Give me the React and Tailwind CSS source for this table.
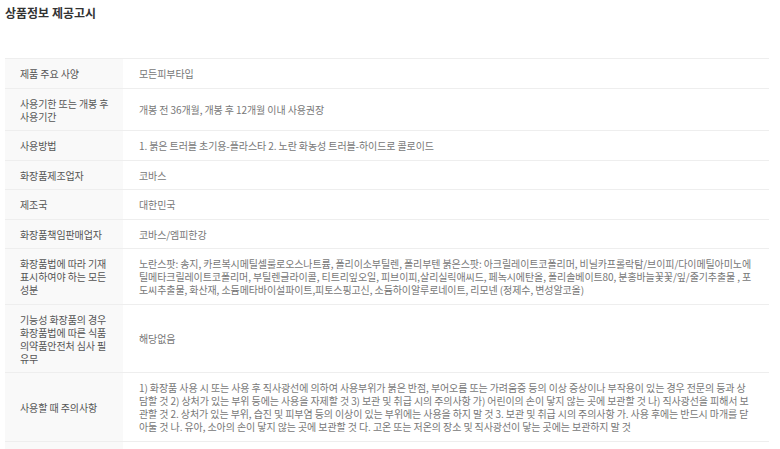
import React from 'react'

const rows = [
    { label: '제품 주요 사양', value: '모든피부타입' },
    { label: '사용기한 또는 개봉 후 사용기간', value: '개봉 전 36개월, 개봉 후 12개월 이내 사용권장' },
    { label: '사용방법', value: '1. 붉은 트러블 초기용-플라스타 2. 노란 화농성 트러블-하이드로 콜로이드' },
    { label: '화장품제조업자', value: '코바스' },
    { label: '제조국', value: '대한민국' },
    { label: '화장품책임판매업자', value: '코바스/엠피한강' },
    {
        label: '화장품법에 따라 기재 표시하여야 하는 모든 성분',
        value: '노란스팟: 송지, 카르복시메틸셀룰로오스나트륨, 폴리이소부틸렌, 폴리부텐 붉은스팟: 아크릴레이트코폴리머, 비닐카프롤락탐/브이피/다이메틸아미노에틸메타크릴레이트코폴리머, 부틸렌글라이콜, 티트리잎오일, 피브이피,살리실릭애씨드, 페녹시에탄올, 폴리솔베이트80, 분홍바늘꽃꽃/잎/줄기추출물 , 포도씨추출물, 화산재, 소듐메타바이설파이트,피토스핑고신, 소듐하이알루로네이트, 리모넨 (정제수, 변성알코올)',
    },
    { label: '기능성 화장품의 경우 화장품법에 따른 식품의약품안전처 심사 필 유무', value: '해당없음' },
    {
        label: '사용할 때 주의사항',
        value: '1) 화장품 사용 시 또는 사용 후 직사광선에 의하여 사용부위가 붉은 반점, 부어오름 또는 가려움증 등의 이상 증상이나 부작용이 있는 경우 전문의 등과 상담할 것 2) 상처가 있는 부위 등에는 사용을 자제할 것 3) 보관 및 취급 시의 주의사항 가) 어린이의 손이 닿지 않는 곳에 보관할 것 나) 직사광선을 피해서 보관할 것 2. 상처가 있는 부위, 습진 및 피부염 등의 이상이 있는 부위에는 사용을 하지 말 것 3. 보관 및 취급 시의 주의사항 가. 사용 후에는 반드시 마개를 닫아둘 것 나. 유아, 소아의 손이 닿지 않는 곳에 보관할 것 다. 고온 또는 저온의 장소 및 직사광선이 닿는 곳에는 보관하지 말 것',
    },
]

const App = () => {
    return (
        <div className="w-[780px] h-[449px] overflow-hidden bg-white font-['Noto_Sans_CJK_KR',sans-serif]">
            <h2 className="pl-[5px] pt-[5px] text-[12px] leading-[16px] font-bold text-[#333]">상품정보 제공고시</h2>

            <table className="ml-[5px] mt-[37px] w-[764px] border-collapse border-t border-[#eeeeee] table-fixed">
                <tbody>
                    {rows.map((row) => (
                        <tr key={row.label} className="border-b border-[#eeeeee]">
                            <th className="w-[118px] bg-[#f9f9f9] pl-[15px] pr-[10px] pt-[8px] pb-[7.5px] text-left align-middle text-[10px] leading-[13px] tracking-[-0.1px] font-normal text-[#555]">
                                {row.label}
                            </th>
                            <td className="pl-[16px] pr-[16px] pt-[8px] pb-[7.5px] align-middle text-[10px] leading-[13px] tracking-[-0.1px] text-[#777]">
                                {row.value}
                            </td>
                        </tr>
                    ))}
                    <tr>
                        <th className="w-[118px] h-[30px] bg-[#f9f9f9]"></th>
                        <td></td>
                    </tr>
                </tbody>
            </table>
        </div>
    )
}

export default App
